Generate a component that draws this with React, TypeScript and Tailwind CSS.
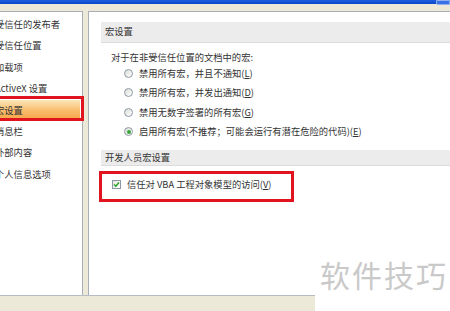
import React from "react";

const font = { fontFamily: '"Noto Sans CJK SC", "Noto Sans", sans-serif' };

const navItems = ["受信任的发布者", "受信任位置", "加载项", "ActiveX 设置", "宏设置", "消息栏", "外部内容", "个人信息选项"];

function Radio({ checked }: { checked?: boolean }) {
  return (
    <span className="flex h-[9px] w-[9px] shrink-0 items-center justify-center rounded-full border border-[#8c9aa6] bg-gradient-to-br from-[#dcdcd6] to-white">
      {checked && <span className="h-[4px] w-[4px] rounded-full bg-[#3aa33a]" />}
    </span>
  );
}

function Key({ k }: { k: string }) {
  return (
    <>
      (<span className="underline underline-offset-1">{k}</span>)
    </>
  );
}

function Option({ text, k, checked }: { text: string; k: string; checked?: boolean }) {
  return (
    <div className="flex h-[19.3px] items-center gap-[6px] pl-[23px]">
      <Radio checked={checked} />
      <span>
        {text}
        <Key k={k} />
      </span>
    </div>
  );
}

export default function App() {
  return (
    <div className="relative flex h-[311px] w-[450px] flex-col overflow-hidden bg-[#ece9d8] text-[9.3px] leading-none text-[#333]" style={font}>
      {/* title bar strip */}
      <div className="relative h-[4px] bg-gradient-to-b from-[#1d5fe0] to-[#0b46c9]">
        <div className="absolute right-0 top-0 h-[5px] w-[14px] rounded-bl-[2px] border border-[#8fb0f0] bg-[#3a72e6]" />
      </div>

      <div className="mt-[7px] flex flex-1 gap-[5px]">
        {/* left nav */}
        <div className="w-[83px] border-r border-t border-[#a7aeb8] bg-white pt-[2px]">
          {navItems.map((item) => (
            <div
              key={item}
              className={
                "flex h-[21.4px] items-center whitespace-nowrap " +
                (item === "宏设置" ? "mr-[2px] bg-gradient-to-b from-[#fde6b8] via-[#f9bd6c] to-[#f6a23e]" : "")
              }
            >
              <span className="-ml-[5px]">{item}</span>
            </div>
          ))}
        </div>

        {/* right content */}
        <div className="flex-1 border-l border-t border-[#a7aeb8] bg-white pt-[10px] pl-[12px]">
          <div className="flex h-[21px] items-center border-b border-[#dcdcdc] bg-[#ececec] pl-[4px]">宏设置</div>
          <div className="flex h-[21px] items-center pl-[10px] pt-[9px]">对于在非受信任位置的文档中的宏:</div>
          <Option text="禁用所有宏，并且不通知" k="L" />
          <Option text="禁用所有宏，并发出通知" k="D" />
          <Option text="禁用无数字签署的所有宏" k="G" />
          <Option text="启用所有宏(不推荐；可能会运行有潜在危险的代码)" k="E" checked />
          <div className="mt-[9px] flex h-[16px] items-center border-b border-[#dcdcdc] bg-[#ececec] pl-[4px]">开发人员宏设置</div>
          <div className="flex h-[36px] items-center gap-[6px] pl-[11px]">
            <span className="flex h-[9px] w-[9px] items-center justify-center border border-[#8c9aa6] bg-gradient-to-br from-[#e4e4de] to-white">
              <svg width="7" height="7" viewBox="0 0 7 7">
                <path d="M1 3.5 L2.8 5.3 L6 1.5" fill="none" stroke="#21a121" strokeWidth="1.4" />
              </svg>
            </span>
            <span>
              信任对 VBA 工程对象模型的访问
              <Key k="V" />
            </span>
          </div>
        </div>
      </div>

      {/* bottom strip */}
      <div className="flex h-[16px] border-t border-[#b8bcc4]">
        <div className="w-[315px] bg-[#ece9d8]" />
        <div className="flex-1 bg-white" />
      </div>
      <div className="absolute bottom-[0px] right-0 h-[62px] w-[135px] bg-white" />

      {/* annotations */}
      <div className="absolute left-[-4px] top-[96px] h-[25px] w-[88px] border-[3px] border-[#e0141e]" />
      <div className="absolute left-[99px] top-[171px] h-[31px] w-[195px] border-[3px] border-[#e0141e]" />

      {/* watermark */}
      <div className="absolute left-[320px] top-[259px] text-[30px] leading-none tracking-[2px] text-[#c9c9c9]">软件技巧</div>
    </div>
  );
}
